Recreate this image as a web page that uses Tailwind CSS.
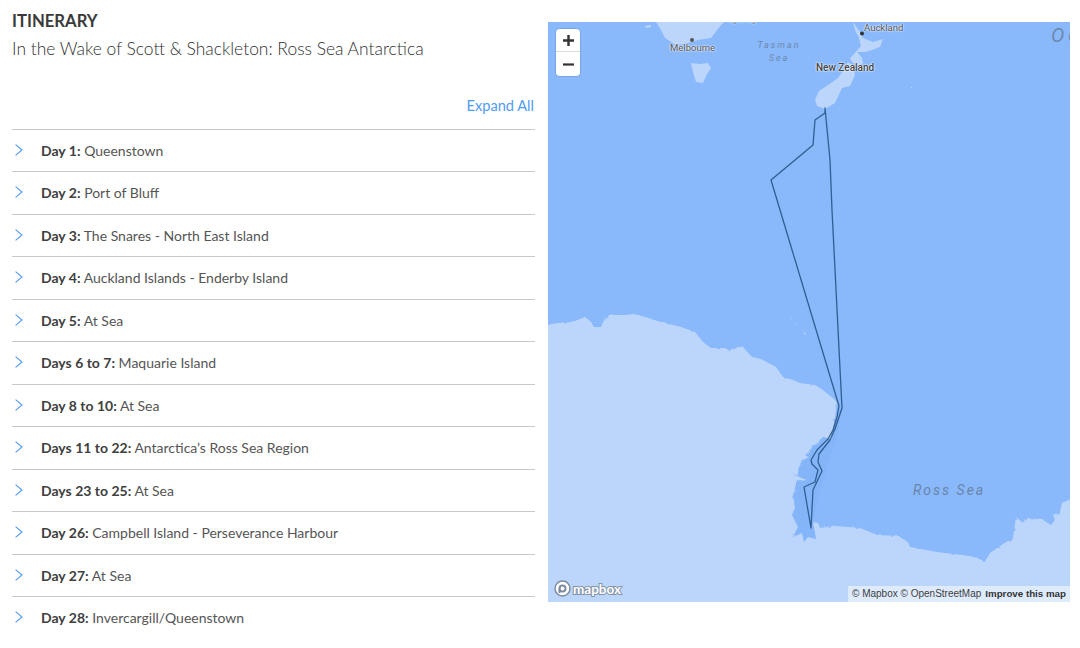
<!DOCTYPE html>
<html lang="en">
<head>
    <meta charset="UTF-8">
    <meta name="viewport" content="width=device-width, initial-scale=1.0">
    <title>Itinerary</title>
    <script src="https://cdn.jsdelivr.net/npm/@tailwindcss/browser@4"></script>
</head>
<body class="bg-white overflow-hidden font-['Lato',sans-serif] text-[#3c3c3c]">
    <main class="flex w-[1080px] h-[648px] pl-3 gap-[13px]">
        <!-- Itinerary column -->
        <section class="w-[523px] shrink-0 pt-[11px]">
            <h2 class="text-[16.7px] leading-[21px] font-bold text-[#3a3a3a]">ITINERARY</h2>
            <p class="text-[17.45px] leading-[24px] mt-[5px] font-light text-[#2f2f2f]">In the Wake of Scott &amp; Shackleton: Ross Sea Antarctica</p>
            <div class="text-right pr-px mt-[35px] h-[32.5px] text-[14.6px] leading-[20px] text-[#4f9bf5]">Expand All</div>
            <ul class="text-[14px] text-[#555]">
                <li class="flex h-[42.5px] border-t border-[#c8c8c8] pl-[3px] pt-[11px] leading-[20px]"><svg class="w-2 h-3 mr-[18px] mt-[3px] shrink-0" viewBox="0 0 8 12" fill="none" stroke="#4f9bf5" stroke-width="1.1"><path d="M0.6 0.6 7 6 0.6 11.4"/></svg><span><b class="font-bold text-[#404040]">Day 1:</b> Queenstown</span></li>
                <li class="flex h-[42.5px] border-t border-[#c8c8c8] pl-[3px] pt-[11px] leading-[20px]"><svg class="w-2 h-3 mr-[18px] mt-[3px] shrink-0" viewBox="0 0 8 12" fill="none" stroke="#4f9bf5" stroke-width="1.1"><path d="M0.6 0.6 7 6 0.6 11.4"/></svg><span><b class="font-bold text-[#404040]">Day 2:</b> Port of Bluff</span></li>
                <li class="flex h-[42.5px] border-t border-[#c8c8c8] pl-[3px] pt-[11px] leading-[20px]"><svg class="w-2 h-3 mr-[18px] mt-[3px] shrink-0" viewBox="0 0 8 12" fill="none" stroke="#4f9bf5" stroke-width="1.1"><path d="M0.6 0.6 7 6 0.6 11.4"/></svg><span><b class="font-bold text-[#404040]">Day 3:</b> The Snares - North East Island</span></li>
                <li class="flex h-[42.5px] border-t border-[#c8c8c8] pl-[3px] pt-[11px] leading-[20px]"><svg class="w-2 h-3 mr-[18px] mt-[3px] shrink-0" viewBox="0 0 8 12" fill="none" stroke="#4f9bf5" stroke-width="1.1"><path d="M0.6 0.6 7 6 0.6 11.4"/></svg><span><b class="font-bold text-[#404040]">Day 4:</b> Auckland Islands - Enderby Island</span></li>
                <li class="flex h-[42.5px] border-t border-[#c8c8c8] pl-[3px] pt-[11px] leading-[20px]"><svg class="w-2 h-3 mr-[18px] mt-[3px] shrink-0" viewBox="0 0 8 12" fill="none" stroke="#4f9bf5" stroke-width="1.1"><path d="M0.6 0.6 7 6 0.6 11.4"/></svg><span><b class="font-bold text-[#404040]">Day 5:</b> At Sea</span></li>
                <li class="flex h-[42.5px] border-t border-[#c8c8c8] pl-[3px] pt-[11px] leading-[20px]"><svg class="w-2 h-3 mr-[18px] mt-[3px] shrink-0" viewBox="0 0 8 12" fill="none" stroke="#4f9bf5" stroke-width="1.1"><path d="M0.6 0.6 7 6 0.6 11.4"/></svg><span><b class="font-bold text-[#404040]">Days 6 to 7:</b> Maquarie Island</span></li>
                <li class="flex h-[42.5px] border-t border-[#c8c8c8] pl-[3px] pt-[11px] leading-[20px]"><svg class="w-2 h-3 mr-[18px] mt-[3px] shrink-0" viewBox="0 0 8 12" fill="none" stroke="#4f9bf5" stroke-width="1.1"><path d="M0.6 0.6 7 6 0.6 11.4"/></svg><span><b class="font-bold text-[#404040]">Day 8 to 10:</b> At Sea</span></li>
                <li class="flex h-[42.5px] border-t border-[#c8c8c8] pl-[3px] pt-[11px] leading-[20px]"><svg class="w-2 h-3 mr-[18px] mt-[3px] shrink-0" viewBox="0 0 8 12" fill="none" stroke="#4f9bf5" stroke-width="1.1"><path d="M0.6 0.6 7 6 0.6 11.4"/></svg><span><b class="font-bold text-[#404040]">Days 11 to 22:</b> Antarctica’s Ross Sea Region</span></li>
                <li class="flex h-[42.5px] border-t border-[#c8c8c8] pl-[3px] pt-[11px] leading-[20px]"><svg class="w-2 h-3 mr-[18px] mt-[3px] shrink-0" viewBox="0 0 8 12" fill="none" stroke="#4f9bf5" stroke-width="1.1"><path d="M0.6 0.6 7 6 0.6 11.4"/></svg><span><b class="font-bold text-[#404040]">Days 23 to 25:</b> At Sea</span></li>
                <li class="flex h-[42.5px] border-t border-[#c8c8c8] pl-[3px] pt-[11px] leading-[20px]"><svg class="w-2 h-3 mr-[18px] mt-[3px] shrink-0" viewBox="0 0 8 12" fill="none" stroke="#4f9bf5" stroke-width="1.1"><path d="M0.6 0.6 7 6 0.6 11.4"/></svg><span><b class="font-bold text-[#404040]">Day 26:</b> Campbell Island - Perseverance Harbour</span></li>
                <li class="flex h-[42.5px] border-t border-[#c8c8c8] pl-[3px] pt-[11px] leading-[20px]"><svg class="w-2 h-3 mr-[18px] mt-[3px] shrink-0" viewBox="0 0 8 12" fill="none" stroke="#4f9bf5" stroke-width="1.1"><path d="M0.6 0.6 7 6 0.6 11.4"/></svg><span><b class="font-bold text-[#404040]">Day 27:</b> At Sea</span></li>
                <li class="flex h-[42.5px] border-t border-[#c8c8c8] pl-[3px] pt-[11px] leading-[20px]"><svg class="w-2 h-3 mr-[18px] mt-[3px] shrink-0" viewBox="0 0 8 12" fill="none" stroke="#4f9bf5" stroke-width="1.1"><path d="M0.6 0.6 7 6 0.6 11.4"/></svg><span><b class="font-bold text-[#404040]">Day 28:</b> Invercargill/Queenstown</span></li>
            </ul>
        </section>

        <!-- Map -->
        <section class="relative mt-[22px] w-[522px] h-[580px] overflow-hidden bg-[#89b8fb] font-['Roboto',sans-serif]">
            <svg class="absolute inset-0 w-full h-full" viewBox="548 22 522 580">
                <defs>
                    <filter id="rough" x="-5%" y="-5%" width="110%" height="110%">
                        <feTurbulence type="fractalNoise" baseFrequency="0.18" numOctaves="2" seed="4"/>
                        <feDisplacementMap in="SourceGraphic" scale="3"/>
                    </filter>
                </defs>
                <!-- land -->
                <g fill="#bcd6fb">
                    <path d="M656 22 661 30 665 38 676 45 688 43 698 40 711 38 721 25 725 22Z"/>
                    <path d="M691 63 700 64 708 63 711 68 706 76 703 83 696 82 693 72Z"/>
                    <path d="M645 26 651 25 651 27 646 28Z"/>
                    <path d="M853 22 860 32 863 38 873 42 883 39 880 47 872 50 865 52 857 52 862 58 863 63 859 66 852 62 850 58 855 53 861 46 859 38 855 30Z"/>
                    <path d="M848 62 853 66 855 75 850 86 842 88 835 103 825 109 817 106 815 100 819 91 828 85 838 78 845 68Z"/>
                    <path filter="url(#rough)" d="M540 326 558 323 565 323 575 321 585 317 591 322 594 327 601 327 605 318 610 315 626 315 634 314 645 317 661 322 681 327 695 332 703 342 711 348 725 348 730 351 735 347 743 347 752 357 761 359 776 367 783 377 793 380 800 383 815 385 823 390 835 400 837 403 835 417 832 435 832 439 823 437 810 450 805 455 810 458 802 460 798 470 798 475 793 474 808 481 797 480 793 495 795 508 792 515 798 527 793 537 802 533 804 542 808 537 816 539 813 522 818 523 820 528 835 526 860 528 877 535 898 536 908 542 910 547 937 552 970 556 982 560 984 563 990 553 1003 544 1013 538 1016 517 1023 523 1028 518 1043 520 1051 525 1055 520 1053 515 1060 512 1062 503 1080 495 1080 612 540 612Z"/>
                    <path d="M791 317.500l1 1-1 .5zM795 323l1.500 1-1 .5zM804 332l1.500 1-.5 2-1-1zM911 87h1v1h-1z"/>
                </g>
                <!-- shallow water near the coast -->
                <path fill="#7fb2f8" fill-opacity=".4" d="M835 403 837 417 832 435 832 439 823 437 810 450 805 455 810 458 802 460 798 470 798 475 808 481 797 480 793 495 795 508 792 515 798 527 793 537 802 533 804 542 808 537 816 539 813 522 818 500 826 470 836 440 842 410Z"/>
                <!-- route -->
                <path fill="none" stroke="#2f5f92" stroke-width="1.300" stroke-linejoin="round" d="M825 108 825 113 815 120 813 145 771 180 839 406 837 417 833 430 828 439 817 450 811 460 812 464 818 470 815 482 804 487 811 528 813 490 822 471 818 462 819 454 830 440 835 429 842 408 832 210 830 160Z"/>
                <circle cx="692" cy="40" r="2" fill="#555"/>
                <circle cx="862" cy="33.500" r="2" fill="#333"/>
            </svg>

            <!-- place labels -->
            <span class="absolute left-[122px] top-[20px] w-[44px] text-center text-[9.5px] leading-3 text-[#555] [text-shadow:0_0_2px_#fff,0_0_2px_#fff]">Melbourne</span>
            <span class="absolute left-[316px] top-0 text-[9.5px] leading-3 text-[#555] [text-shadow:0_0_2px_#fff,0_0_2px_#fff]">Auckland</span>
            <span class="absolute left-[268px] top-[40px] text-[10px] leading-3 font-medium text-[#444] [text-shadow:0_0_2px_#fff,0_0_2px_#fff]">New Zealand</span>
            <span class="absolute left-[205px] top-[17px] w-[52px] text-center text-[9px] leading-[13px] italic tracking-[2px] text-[#6c8aae]">Tasman<br>Sea</span>
            <span class="absolute left-[365px] top-[460px] text-[14px] leading-4 italic tracking-[2px] text-[#6a85a8]">Ross Sea</span>
            <span class="absolute left-[503px] top-[3px] text-[20px] leading-5 italic tracking-[4px] text-[#6c8aae] whitespace-nowrap">Oc</span>
            <span class="absolute left-[180px] -top-[9px] text-[9px] leading-3 text-[#666] [text-shadow:0_0_2px_#fff,0_0_2px_#fff]">Sydney</span>

            <!-- zoom control -->
            <div class="absolute left-2 top-[7px] w-6 h-[47px] rounded bg-white shadow-[0_0_0_1px_rgba(0,0,0,0.1)] flex flex-col">
                <div class="h-[23px] flex items-center justify-center border-b border-[#ddd]">
                    <svg class="w-[11px] h-[11px]" viewBox="0 0 11 11" fill="#333"><path d="M4.300 0h2.400v4.300H11v2.400H6.700V11H4.300V6.700H0V4.300h4.300z"/></svg>
                </div>
                <div class="flex-1 flex items-center justify-center">
                    <svg class="w-[11px] h-[11px]" viewBox="0 0 11 11" fill="#333"><path d="M0 4.400h11v2.200H0z"/></svg>
                </div>
            </div>

            <!-- mapbox logo -->
            <div class="absolute left-[6px] bottom-[5px] flex items-center gap-[2px]">
                <svg class="w-[17px] h-[17px]" viewBox="0 0 17 17"><circle cx="8.500" cy="8.500" r="7.500" fill="#fff" stroke="#7d8ba0" stroke-width="1.500"/><circle cx="8.500" cy="8.500" r="3" fill="none" stroke="#7d8ba0" stroke-width="2"/><path d="M5.500 8.500 5.500 13" stroke="#7d8ba0" stroke-width="2"/></svg>
                <span class="text-[13.5px] leading-4 font-bold text-white [-webkit-text-stroke:2px_#8593a8] [paint-order:stroke] font-['Lato',sans-serif]">mapbox</span>
            </div>

            <!-- attribution -->
            <div class="absolute right-0 bottom-0 h-4 pl-1 pr-1 bg-white/50 flex items-center gap-1 text-[10px] leading-4 text-[#3f3f3f] font-['Liberation_Sans',sans-serif] whitespace-nowrap">
                <span>© Mapbox © OpenStreetMap</span>
                <b class="font-bold text-[9.75px] text-[#333]">Improve this map</b>
            </div>
        </section>
    </main>
</body>
</html>
